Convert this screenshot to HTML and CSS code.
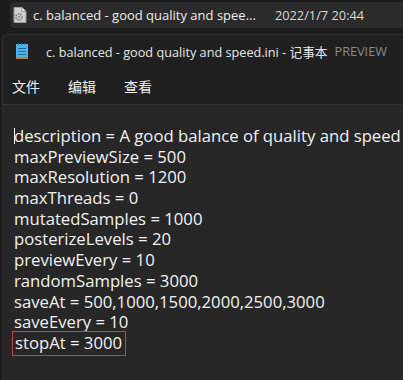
FILE: index.html
```html
<!DOCTYPE html>
<html>
<head>
<meta charset="utf-8">
<link rel="stylesheet" href="styles.css">
</head>
<body>
<div class="screen">
  <div class="filebar">
    <div class="fileitem">
      <svg class="fileicon" width="14" height="16" viewBox="0 0 14 16">
        <path d="M1 0.5h8l4 4v11H1z" fill="#cfcfcf" stroke="#9a9a9a" stroke-width="1"/>
        <path d="M9 0.5v4h4" fill="#e8e8e8" stroke="#9a9a9a" stroke-width="1"/>
        <circle cx="6" cy="10" r="3" fill="none" stroke="#777" stroke-width="1.6" stroke-dasharray="1.5 1"/>
        <circle cx="6" cy="10" r="1" fill="#888"/>
      </svg>
      <span class="fname">c. balanced - good quality and spee...</span>
      <span class="fdate">2022/1/7 20:44</span>
    </div>
  </div>
  <div class="window">
    <div class="titlebar">
      <svg class="npicon" width="12" height="16" viewBox="0 0 12 16">
        <rect x="0" y="1" width="12" height="14" fill="#4fb3e8"/>
        <rect x="0" y="14" width="12" height="2" fill="#c07a3a"/>
        <rect x="2" y="0" width="1" height="2" fill="#2a6a90"/>
        <rect x="5" y="0" width="1" height="2" fill="#2a6a90"/>
        <rect x="8" y="0" width="1" height="2" fill="#2a6a90"/>
        <rect x="2" y="5" width="8" height="1" fill="#1e6ea0"/>
        <rect x="2" y="8" width="8" height="1" fill="#1e6ea0"/>
        <rect x="2" y="11" width="8" height="1" fill="#1e6ea0"/>
      </svg>
      <span class="title">c. balanced - good quality and speed.ini - 记事本</span>
      <span class="preview">PREVIEW</span>
    </div>
    <div class="menubar">
      <span class="menu">文件</span>
      <span class="menu">编辑</span>
      <span class="menu">查看</span>
    </div>
    <div class="editor">
      <div class="line"><span class="caret"></span>description = A good balance of quality and speed</div>
      <div class="line">maxPreviewSize = 500</div>
      <div class="line">maxResolution = 1200</div>
      <div class="line">maxThreads = 0</div>
      <div class="line">mutatedSamples = 1000</div>
      <div class="line">posterizeLevels = 20</div>
      <div class="line">previewEvery = 10</div>
      <div class="line">randomSamples = 3000</div>
      <div class="line">saveAt = 500,1000,1500,2000,2500,3000</div>
      <div class="line">saveEvery = 10</div>
      <div class="line"><span class="highlight">stopAt = 3000</span></div>
    </div>
  </div>
</div>
</body>
</html>
```

FILE: styles.css
```css
html, body {
  margin: 0;
  padding: 0;
  background: #1c1c1c;
}
.screen {
  width: 403px;
  height: 380px;
  overflow: hidden;
  font-family: "Open Sans", "Noto Sans CJK SC", sans-serif;
  color: #f0f0f0;
}
.filebar {
  height: 34px;
  padding: 2px 0 0 10px;
  box-sizing: border-box;
  background: #1c1c1c;
}
.fileitem {
  height: 26px;
  background: #2b2b2b;
  border-radius: 4px 0 0 4px;
  display: flex;
  align-items: center;
  padding-left: 3px;
  white-space: nowrap;
}
.fileicon { flex: none; }
.fname {
  margin-left: 6px;
  font-size: 13px;
  color: #ececec;
}
.fdate {
  margin-left: 19px;
  font-size: 12.8px;
  color: #d8d8d8;
}
.window {
  margin-left: 2px;
  background: #202020;
  border-top-left-radius: 6px;
  border-top: 1px solid #2e2e2e;
  border-left: 1px solid #2e2e2e;
  height: 346px;
}
.titlebar {
  height: 32px;
  display: flex;
  align-items: center;
  padding-left: 13px;
  white-space: nowrap;
}
.npicon { flex: none; }
.title {
  margin-left: 18px;
  font-size: 12.7px;
  color: #e6e6e6;
}
.preview {
  margin-left: 7px;
  font-size: 12.7px;
  color: #8a8a8a;
}
.menubar {
  height: 37px;
  display: flex;
  align-items: center;
  padding-left: 9px;
  gap: 28px;
  border-bottom: 1px solid #333;
}
.menu {
  font-size: 14px;
  color: #f0f0f0;
}
.editor {
  background: #272727;
  padding: 21px 0 0 11px;
  height: 278px;
}
.line {
  font-size: 16.7px;
  line-height: 20.7px;
  height: 20.7px;
  white-space: nowrap;
  color: #f2f2f2;
  position: relative;
}
.caret {
  position: absolute;
  left: 0;
  top: 2px;
  width: 1px;
  height: 16px;
  background: #f0f0f0;
}
.highlight {
  display: inline-block;
  outline: 1px solid #c94545;
  outline-offset: 1px;
  padding: 0 2px 0 1px;
}
```
